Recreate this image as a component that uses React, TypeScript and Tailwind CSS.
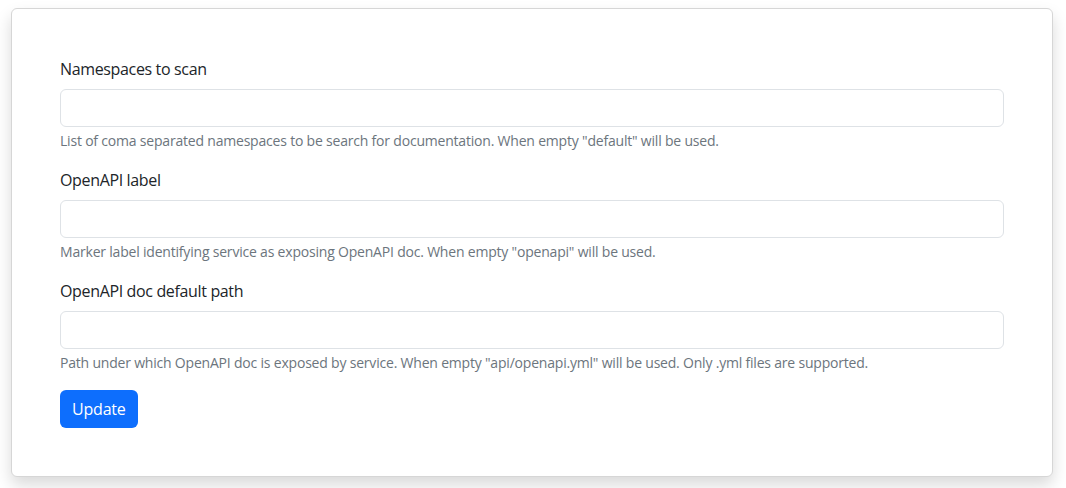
export default function App() {
  const fields = [
    {
      label: "Namespaces to scan",
      help: 'List of coma separated namespaces to be search for documentation. When empty "default" will be used.',
    },
    {
      label: "OpenAPI label",
      help: 'Marker label identifying service as exposing OpenAPI doc. When empty "openapi" will be used.',
    },
    {
      label: "OpenAPI doc default path",
      help: 'Path under which OpenAPI doc is exposed by service. When empty "api/openapi.yml" will be used. Only .yml files are supported.',
    },
  ];

  return (
    <div className="min-h-[488px] bg-white pt-[8px] pl-[11px] font-['Open_Sans',sans-serif] text-[#212529]">
      <div className="w-[1042px] h-[469px] rounded-md border border-[#d6d6d6] bg-white p-12 shadow-[0_8px_16px_rgba(0,0,0,0.15)]">
        <form onSubmit={(e) => e.preventDefault()}>
          {fields.map((f) => (
            <div key={f.label} className="mb-[17px]">
              <label className="block mb-2 text-base leading-6 tracking-[-0.35px]">{f.label}</label>
              <input
                type="text"
                className="block w-full h-[38px] rounded-md border border-[#dee2e6] bg-white px-3 outline-none"
              />
              <div className="mt-[3px] text-sm leading-[21px] tracking-[-0.2px] text-[#6c757d]">{f.help}</div>
            </div>
          ))}
          <button
            type="submit"
            className="h-[38px] rounded-md bg-[#0d6efd] px-3 text-base leading-6 tracking-[-0.2px] text-white"
          >
            Update
          </button>
        </form>
      </div>
    </div>
  );
}
